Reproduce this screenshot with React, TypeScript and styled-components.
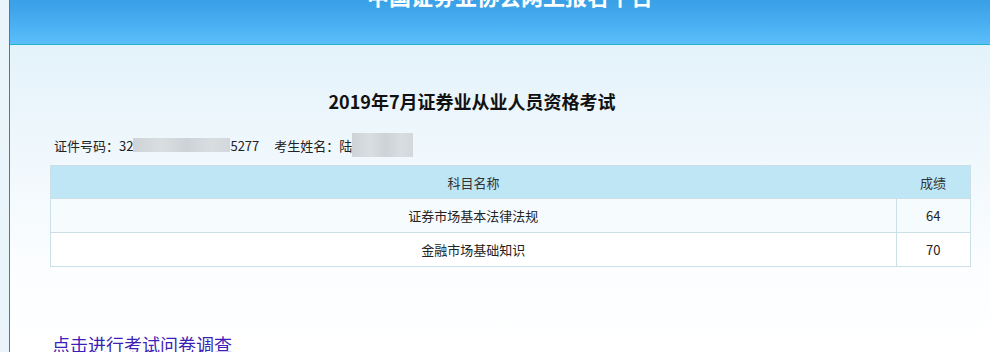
import styled, { createGlobalStyle } from 'styled-components'

const GlobalStyle = createGlobalStyle`
  html, body {
    margin: 0;
    padding: 0;
    background: #eaf5fb;
  }
  body {
    font-family: 'Noto Sans CJK SC', 'Noto Sans', sans-serif;
    color: #222;
  }
`

interface Score {
  subject: string
  score: number
}

const scores: Score[] = [
  { subject: '证券市场基本法律法规', score: 64 },
  { subject: '金融市场基础知识', score: 70 },
]

export default function App() {
  return (
    <>
      <GlobalStyle />
      <Frame>
        <Header>
          <SiteName>中国证券业协会网上报名平台</SiteName>
        </Header>
        <Main>
          <ExamTitle>2019年7月证券业从业人员资格考试</ExamTitle>
          <Candidate>
            证件号码：32
            <Masked $width={97} $height={14} />
            5277
            <Spacer />
            考生姓名：陆
            <Masked $width={61} $height={24} />
          </Candidate>
          <Table>
            <thead>
              <tr>
                <HeadCell>科目名称</HeadCell>
                <HeadCell $narrow>成绩</HeadCell>
              </tr>
            </thead>
            <tbody>
              {scores.map((row, i) => (
                <Row key={row.subject} $tint={i === 0}>
                  <Cell>{row.subject}</Cell>
                  <Cell>{row.score}</Cell>
                </Row>
              ))}
            </tbody>
          </Table>
          <SurveyLink href="#">点击进行考试问卷调查</SurveyLink>
        </Main>
      </Frame>
    </>
  )
}

const Frame = styled.div`
  margin-left: 9px;
  border-left: 1px solid #6f7275;
  min-height: 352px;
  background: linear-gradient(180deg, #dff0fa 0px, #eef7fc 140px, #fbfdff 260px, #ffffff 352px);
`

const Header = styled.header`
  height: 44px;
  overflow: hidden;
  background: linear-gradient(180deg, #399fe6 0%, #4cb1f2 60%, #5bbefa 100%);
  border-bottom: 1px solid #22b4c6;
  text-align: center;
`

const SiteName = styled.h1`
  margin: -16px 0 0 20px;
  font-size: 22px;
  line-height: 22px;
  font-weight: 700;
  color: #fff;
`

const Main = styled.main`
  padding: 44px 20px 0 40px;
`

const ExamTitle = styled.h2`
  margin: 0;
  width: 844px;
  text-align: center;
  font-size: 18px;
  line-height: 24px;
  font-weight: 700;
  color: #111;
`

const Candidate = styled.div`
  margin-top: 20px;
  padding-left: 4px;
  display: flex;
  align-items: center;
  height: 24px;
  font-size: 13px;
  color: #222;
`

const Masked = styled.span<{ $width: number; $height: number }>`
  display: inline-block;
  width: ${p => p.$width}px;
  height: ${p => p.$height}px;
  background: linear-gradient(90deg, #cdd3d7, #d9dee1 30%, #ccd2d6 55%, #d8dde0 80%, #d2d8dc);
`

const Spacer = styled.span`
  display: inline-block;
  width: 15px;
`

const Table = styled.table`
  margin-top: 8px;
  width: 921px;
  border-collapse: collapse;
  font-size: 13px;
  border: 1px solid #cbdfe9;
`

const HeadCell = styled.th<{ $narrow?: boolean }>`
  height: 32px;
  padding: 0;
  width: ${p => (p.$narrow ? '74px' : 'auto')};
  background: #bee6f5;
  font-weight: 400;
  color: #333;
  text-align: center;
`

const Row = styled.tr<{ $tint: boolean }>`
  background: ${p => (p.$tint ? '#f6fbfe' : '#ffffff')};
`

const Cell = styled.td`
  height: 33px;
  padding: 0;
  text-align: center;
  color: #222;
  border: 1px solid #cbdfe9;
`

const SurveyLink = styled.a`
  display: inline-block;
  margin-top: 66px;
  margin-left: 2px;
  font-size: 18px;
  line-height: 22px;
  color: #3b1fb8;
  text-decoration: none;
`
